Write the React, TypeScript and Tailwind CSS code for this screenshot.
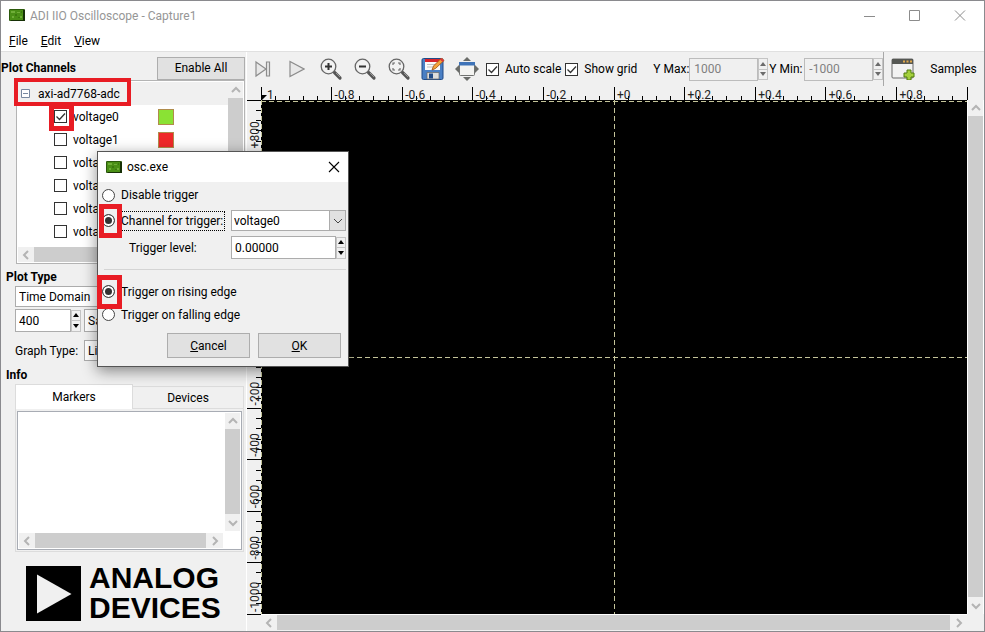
import type { ReactNode } from "react";

function BoardIcon() {
  return (
    <svg width="16" height="13" viewBox="0 0 16 13" aria-hidden="true">
      <rect width="16" height="12" rx="1" fill="#2c5a0c" />
      <rect x="1" y="1" width="13" height="10" fill="#4a8f16" />
      <path d="M2 2h4v2H2zM8 3h3v1H8zM3 7h2v2H3zM11 7h2v2h-2z" fill="#6fae38" />
      <path d="M6 5h2v2H6zM9 8h2v1H9zM12 2h1v2h-1z" fill="#3b780f" />
      <path d="M14 1h2v11H2v-1h12z" fill="#163006" />
    </svg>
  );
}

type Dir = "up" | "down" | "left" | "right";
const chevrons: Record<Dir, string> = {
  up: "M1 7l4-4 4 4",
  down: "M1 3l4 4 4-4",
  left: "M7 1L3 5l4 4",
  right: "M3 1l4 4-4 4",
};

function Chevron({ dir, color = "#b4b4b4", width = 2 }: { dir: Dir; color?: string; width?: number }) {
  return (
    <svg width="10" height="10" viewBox="0 0 10 10" fill="none" stroke={color} strokeWidth={width} aria-hidden="true">
      <path d={chevrons[dir]} />
    </svg>
  );
}

function ScrollV() {
  return (
    <div className="flex h-full w-[15px] shrink-0 flex-col bg-[#f0f0f0]">
      <button aria-label="Scroll up" className="flex h-4 shrink-0 items-center justify-center"><Chevron dir="up" /></button>
      <div className="flex-1 bg-[#cdcdcd]" />
      <button aria-label="Scroll down" className="flex h-[17px] shrink-0 items-center justify-center"><Chevron dir="down" /></button>
    </div>
  );
}

function ScrollH() {
  return (
    <div className="flex h-[15px] min-w-0 flex-1 bg-[#f0f0f0]">
      <button aria-label="Scroll left" className="flex w-4 shrink-0 items-center justify-center"><Chevron dir="left" /></button>
      <div className="flex-1 bg-[#cdcdcd]" />
      <button aria-label="Scroll right" className="flex w-[17px] shrink-0 items-center justify-center"><Chevron dir="right" /></button>
    </div>
  );
}

function Check({ id, label, checked }: { id: string; label: string; checked?: boolean }) {
  return (
    <div className="flex items-center gap-1.5">
      <span className="relative h-[13px] w-[13px] shrink-0">
        <input id={id} type="checkbox" defaultChecked={checked} className="peer block h-[13px] w-[13px] appearance-none border border-[#333] bg-white" />
        <svg className="pointer-events-none absolute inset-0 hidden peer-checked:block" width="13" height="13" viewBox="0 0 13 13" fill="none" stroke="#333" strokeWidth="1.3" aria-hidden="true">
          <path d="M2.5 6.5l3 3 5.5-6" />
        </svg>
      </span>
      <label htmlFor={id} className="whitespace-nowrap">{label}</label>
    </div>
  );
}

function Steps({ disabled }: { disabled?: boolean }) {
  const fill = disabled ? "#6b6b6b" : "#000";
  return (
    <div className="flex h-[22px] w-[10px] shrink-0 flex-col">
      <button aria-label="Increase" className="flex flex-1 items-center justify-center border border-[#c4c4c4] bg-[#f0f0f0]">
        <svg width="6" height="4" viewBox="0 0 6 4" className="shrink-0"><path d="M0 4l3-4 3 4z" fill={fill} /></svg>
      </button>
      <button aria-label="Decrease" className="flex flex-1 items-center justify-center border border-t-0 border-[#c4c4c4] bg-[#f0f0f0]">
        <svg width="6" height="4" viewBox="0 0 6 4" className="shrink-0"><path d="M0 0l3 4 3-4z" fill={fill} /></svg>
      </button>
    </div>
  );
}

function Tool({ label, className, children }: { label: string; className: string; children: ReactNode }) {
  return <button aria-label={label} className={`flex h-6 shrink-0 items-center justify-center ${className}`}>{children}</button>;
}

function Magnifier({ kind }: { kind: "in" | "out" | "fit" }) {
  return (
    <svg width="24" height="24" viewBox="0 0 24 24" fill="none" aria-hidden="true">
      <path d="M15.500 15.500l5.500 5.500" stroke="#555" strokeWidth="3.200" strokeLinecap="round" />
      <path d="M17 16l4 4" stroke="#999" strokeWidth="1" />
      <circle cx="9.500" cy="9.500" r="7.300" fill="#f2f2f2" stroke="#666" strokeWidth="1.300" />
      {kind === "in" && <path d="M9.500 6v7M6 9.500h7" stroke="#333" strokeWidth="2" />}
      {kind === "out" && <path d="M6 9.500h7" stroke="#333" strokeWidth="2" />}
      {kind === "fit" && <path d="M6 8V6h2M11 6h2v2M13 11v2h-2M8 13H6v-2" stroke="#666" strokeWidth="1.100" />}
    </svg>
  );
}

function Toolbar() {
  return (
    <div className="flex h-[34px] shrink-0 items-center overflow-hidden pl-1">
      <Tool label="Single capture" className="mr-[14px] w-6">
        <svg width="20" height="18" viewBox="0 0 20 18" fill="#e8e8e8" stroke="#8c8c8c" strokeWidth="1.200"><path d="M3 2l10 7-10 7zM13.500 2h3v14h-3z" /></svg>
      </Tool>
      <Tool label="Play" className="mr-[14px] w-4">
        <svg width="16" height="18" viewBox="0 0 16 18" fill="#e8e8e8" stroke="#8c8c8c" strokeWidth="1.200"><path d="M1 1.500l14 7.500-14 7.500z" /></svg>
      </Tool>
      <Tool label="Zoom in" className="mr-2.5 w-6"><Magnifier kind="in" /></Tool>
      <Tool label="Zoom out" className="mr-2.5 w-6"><Magnifier kind="out" /></Tool>
      <Tool label="Zoom to fit" className="mr-2.5 w-6"><Magnifier kind="fit" /></Tool>
      <Tool label="Save as" className="mr-2.5 w-6">
        <svg width="24" height="24" viewBox="0 0 24 24" fill="none">
          <rect x="1" y="1.500" width="21" height="21" rx="1.500" fill="#4a7fc4" stroke="#204a87" />
          <rect x="4" y="2" width="15" height="11" fill="#fafafa" />
          <rect x="4" y="2" width="15" height="3" fill="#d8242c" />
          <path d="M6 7.500h9M6 10h7" stroke="#c0c0c0" />
          <path d="M6 15.500h12v6.500H6z" fill="#dcdcdc" stroke="#666" strokeWidth=".7" />
          <rect x="8" y="16.500" width="4" height="5" fill="#204a87" />
          <path d="M20.500 1l2.500 2.500-8.500 8-3.500 1.500 1.500-4z" fill="#f5a33a" stroke="#9b4d0c" strokeWidth=".8" />
          <path d="M20.500 1l2.500 2.500-1.500 1.500-2.700-2.500z" fill="#dc3838" />
        </svg>
      </Tool>
      <Tool label="Full screen" className="mr-[7px] w-6">
        <svg width="24" height="24" viewBox="0 0 24 24">
          <path d="M12 0l4 4H8zM12 24l4-4H8zM0 12l4-4v8zM24 12l-4-4v8z" fill="#6a6c69" />
          <rect x="4.500" y="5.500" width="15" height="13" rx="1" fill="#f3f3f1" stroke="#707270" />
          <path d="M4 5h16v3.500H4z" fill="#3f74b8" />
        </svg>
      </Tool>
      <div className="mr-1 shrink-0"><Check id="autoscale" label="Auto scale" checked /></div>
      <div className="mr-4 shrink-0"><Check id="showgrid" label="Show grid" checked /></div>
      <label htmlFor="ymax" className="w-9 shrink-0 whitespace-nowrap">Y Max:</label>
      <input id="ymax" disabled defaultValue="1000" className="h-[23px] w-[69px] shrink-0 border border-[#bcbcbc] bg-[#f0f0f0] px-1 text-[#808080]" />
      <Steps disabled />
      <label htmlFor="ymin" className="ml-px w-[35px] shrink-0 whitespace-nowrap">Y Min:</label>
      <input id="ymin" disabled defaultValue="-1000" className="h-[23px] w-[69px] shrink-0 border border-[#bcbcbc] bg-[#f0f0f0] px-1 text-[#808080]" />
      <Steps disabled />
      <div className="h-full w-px shrink-0 bg-[#a8a8a8]" />
      <Tool label="New plot" className="mx-[7px] w-6">
        <svg width="24" height="22" viewBox="0 0 24 22">
          <rect x="1" y="1" width="21" height="19" rx="1" fill="#f2f2f2" stroke="#6a6a6a" />
          <path d="M1 1h21v5H1z" fill="#555753" />
          <path d="M12 2.500h2v2h-2zM15.500 2.500h2v2h-2zM19 2.500h2v2h-2z" fill="#e0a84a" />
          <path d="M16 12h4v3h3v4h-3v3h-4v-3h-3v-4h3z" fill="#a4d03c" stroke="#4e7a0c" />
        </svg>
      </Tool>
      <span className="ml-2 whitespace-nowrap">Samples</span>
    </div>
  );
}

const xLabels = ["1", "-0.8", "-0.6", "-0.4", "-0.2", "+0", "+0.2", "+0.4", "+0.6", "+0.8"];
const yLabels = ["", "+800", "+600", "+400", "+200", "+0", "-200", "-400", "-600", "-800", "-1000"];
const ticks = Array.from({ length: 51 }, (_, i) => i);

function Plot() {
  return (
    <div className="grid min-h-0 flex-1 grid-cols-[14px_1fr_17px] grid-rows-[14px_1fr_17px]">
      <div />
      <svg className="h-full w-full overflow-visible" aria-hidden="true">
        {ticks.map((i) => (
          <line key={i} x1={`${i * 2}%`} x2={`${i * 2}%`} y1={i % 5 ? 10 : 1} y2="14" stroke="#000" shapeRendering="crispEdges" />
        ))}
        {xLabels.map((t, i) => (
          <text key={t} x={`${i * 10}%`} dx={i ? 3 : 6} y="13" fontSize="12" fill="#222">{t}</text>
        ))}
        <path d="M1 9h5l-5 5z" fill="#000" />
      </svg>
      <div />
      <svg className="h-full w-full overflow-visible" aria-hidden="true">
        {ticks.map((i) => (
          <line key={i} x1={i % 5 ? 9 : 0} x2="14" y1={`${i * 2}%`} y2={`${i * 2}%`} stroke="#000" shapeRendering="crispEdges" />
        ))}
        {yLabels.map((t, i) => (
          <svg key={i} y={`${i * 10}%`} className="overflow-visible">
            <text transform="rotate(-90)" x={i === 10 ? 2 : 3} y="12" fontSize="12" fill="#222">{t}</text>
          </svg>
        ))}
      </svg>
      <svg className="h-full w-full bg-black" role="img" aria-label="Time domain plot">
        <g stroke="#c4c49a" strokeDasharray="5 3" shapeRendering="crispEdges">
          <line x1="0" x2="100%" y1="1.500" y2="1.500" />
          <line x1=".5" x2=".5" y1="0" y2="100%" />
          <line x1="50%" x2="50%" y1="0" y2="100%" />
          <line x1="0" x2="100%" y1="50%" y2="50%" />
        </g>
      </svg>
      <div className="border-x border-white"><ScrollV /></div>
      <div />
      <div className="flex border-t border-white"><ScrollH /></div>
      <div />
    </div>
  );
}

const channels = [
  ["voltage0", "#8ae234"],
  ["voltage1", "#ef2929"],
  ["voltage2", "#729fcf"],
  ["voltage3", "#fcaf3e"],
  ["voltage4", "#ad7fa8"],
  ["voltage5", "#c17d11"],
];

function Sidebar() {
  return (
    <aside className="flex w-[244px] shrink-0 flex-col">
      <div className="flex h-7 items-center justify-between">
        <h2 className="pt-1 font-bold">Plot Channels</h2>
        <button className="mt-1 h-[23px] w-[88px] border border-[#adadad] bg-[#e1e1e1]">Enable All</button>
      </div>
      <div className="ml-[15px] flex h-[184px] flex-col border border-[#b4b4b4] bg-white p-px">
        <div className="flex min-h-0 flex-1">
          <div className="flex-1 overflow-hidden">
            <div className="flex h-[23px] items-center gap-2 bg-[#f0f0f0] pl-[3px]">
              <svg width="9" height="9" viewBox="0 0 9 9" fill="#fff" stroke="#7888a0" aria-hidden="true"><path d="M.5.5h8v8h-8zM2 4.500h5" /></svg>
              <span>axi-ad7768-adc</span>
            </div>
            {channels.map(([name, color], i) => (
              <div key={name} className="flex h-[23px] items-center pl-9">
                <div className="w-[104px]"><Check id={name} label={name} checked={i === 0} /></div>
                <div className="h-4 w-4 border border-[#b08c4c]" style={{ backgroundColor: color }} />
              </div>
            ))}
          </div>
          <ScrollV />
        </div>
        <div className="mt-[2px] flex pr-[15px]"><ScrollH /></div>
      </div>
      <h2 className="mt-1 ml-[5px] h-[18px] leading-[18px] font-bold">Plot Type</h2>
      <div className="ml-[14px] flex flex-col">
        <select aria-label="Plot type" className="h-[21px] appearance-none border border-[#acacac] bg-white px-[3px]"><option>Time Domain</option></select>
        <div className="mt-[2px] flex items-center">
          <input aria-label="Sample count" defaultValue="400" className="h-[23px] w-[56px] border border-[#acacac] bg-white px-[3px]" />
          <Steps />
          <select aria-label="Units" className="ml-[3px] h-[23px] flex-1 appearance-none border border-[#acacac] bg-white px-[3px]"><option>Samples</option></select>
        </div>
        <div className="mt-2 flex items-center">
          <label htmlFor="graph" className="w-[69px]">Graph Type:</label>
          <select id="graph" className="h-[21px] flex-1 appearance-none border border-[#acacac] bg-white px-[3px]"><option>Lines</option></select>
        </div>
      </div>
      <h2 className="mt-1.5 ml-[5px] h-[17px] leading-[17px] font-bold">Info</h2>
      <div className="mr-px ml-[14px] flex min-h-0 flex-1 flex-col">
        <div className="flex items-end" role="tablist">
          <button role="tab" aria-selected="true" className="h-[25px] w-[118px] border border-b-0 border-[#dcdcdc] bg-white">Markers</button>
          <button role="tab" aria-selected="false" className="h-[23px] flex-1 border border-l-0 border-[#dcdcdc]">Devices</button>
        </div>
        <div className="flex min-h-0 flex-1 border border-t-0 border-[#dcdcdc] p-px pt-[2px]">
          <div className="flex flex-1 flex-col border border-[#a8acb4] bg-white p-px">
            <div className="flex min-h-0 flex-1 justify-end"><ScrollV /></div>
            <div className="mt-[2px] flex pr-[17px]"><ScrollH /></div>
          </div>
        </div>
      </div>
      <div className="mt-[13px] mb-[10px] ml-[25px] flex h-[56px] items-center gap-2">
        <svg width="55" height="55" viewBox="0 0 55 55" className="shrink-0" aria-hidden="true">
          <path d="M0 0h55v55H0z" />
          <path d="M11 8.500v39L45.500 28z" fill="#f0f0f0" />
        </svg>
        <div className="flex flex-col font-['Liberation_Sans',Arial,sans-serif] text-[30px] leading-[30px] font-bold">
          <span>ANALOG</span>
          <span>DEVICES</span>
        </div>
      </div>
    </aside>
  );
}

function Radio({ id, name, label, checked, focused }: { id: string; name: string; label: string; checked?: boolean; focused?: boolean }) {
  return (
    <div className="flex items-center gap-[5px]">
      <input id={id} name={name} type="radio" defaultChecked={checked} className="h-[13px] w-[13px] shrink-0 appearance-none rounded-full border border-[#444] bg-white checked:bg-[#333] checked:shadow-[inset_0_0_0_2px_#fff]" />
      <label htmlFor={id} className={`whitespace-nowrap ${focused ? "border border-dotted border-black py-px pr-px" : "pl-px"}`}>{label}</label>
    </div>
  );
}

function TriggerDialog() {
  return (
    <div role="dialog" aria-label="osc.exe" className="absolute top-[150px] left-[96px] flex w-[252px] flex-col border border-[#555] bg-[#f0f0f0] shadow-[0_4px_14px_rgba(0,0,0,0.45)]">
      <div className="flex h-[30px] items-center gap-[5px] bg-white pr-2 pl-2">
        <BoardIcon />
        <span className="flex-1">osc.exe</span>
        <button aria-label="Close">
          <svg width="12" height="12" viewBox="0 0 12 12" stroke="#000" strokeWidth="1.100"><path d="M1 1l10 10M11 1L1 11" /></svg>
        </button>
      </div>
      <div className="flex flex-col pr-[2px] pl-1">
        <div className="flex h-[26px] items-center"><Radio id="disable" name="mode" label="Disable trigger" /></div>
        <div className="flex h-[25px] items-center justify-between">
          <Radio id="channel" name="mode" label="Channel for trigger:" checked focused />
          <div className="relative w-[115px]">
            <select aria-label="Trigger channel" className="block h-[21px] w-full appearance-none border border-[#acacac] bg-white px-[2px]"><option>voltage0</option></select>
            <span className="pointer-events-none absolute top-0 right-0 flex h-[21px] w-[17px] items-center justify-center border border-[#acacac] bg-[#e1e1e1]"><Chevron dir="down" color="#444" width={1} /></span>
          </div>
        </div>
        <div className="flex h-[29px] items-center">
          <label htmlFor="level" className="w-[129px] pl-[27px]">Trigger level:</label>
          <input id="level" defaultValue="0.00000" className="h-[23px] min-w-0 flex-1 border border-[#acacac] bg-white px-[3px]" />
          <Steps />
        </div>
        <hr className="mt-[7px] mb-[10px] ml-0.5 border-[#d4d4d4]" />
        <div className="flex h-[23px] items-center"><Radio id="rising" name="edge" label="Trigger on rising edge" checked /></div>
        <div className="flex h-[23px] items-center"><Radio id="falling" name="edge" label="Trigger on falling edge" /></div>
        <div className="mt-[7px] mr-[5px] mb-2 flex justify-end gap-2">
          <button className="h-[25px] w-[83px] border border-[#adadad] bg-[#e1e1e1]"><u>C</u>ancel</button>
          <button className="h-[25px] w-[83px] border border-[#adadad] bg-[#e1e1e1]"><u>O</u>K</button>
        </div>
      </div>
    </div>
  );
}

export default function App() {
  return (
    <div className="relative flex h-screen min-h-[600px] flex-col overflow-hidden border border-[#8a8a8e] bg-[#f0f0f0] font-['Roboto','Open_Sans',sans-serif] text-[12px] leading-4 text-black">
      <header className="flex h-[29px] shrink-0 items-center bg-white pr-[18px] pl-2 text-[#969696]">
        <BoardIcon />
        <h1 className="ml-[5px] flex-1">ADI IIO Oscilloscope - Capture1</h1>
        <div className="flex items-center gap-[34px]">
          <button aria-label="Minimize"><svg width="11" height="11" viewBox="0 0 11 11" stroke="#8c8c8c"><path d="M0 6.500h11" /></svg></button>
          <button aria-label="Maximize"><svg width="11" height="11" viewBox="0 0 11 11" fill="none" stroke="#8c8c8c"><path d="M.5.5h10v10H.5z" /></svg></button>
          <button aria-label="Close window"><svg width="12" height="11" viewBox="0 0 12 11" stroke="#8c8c8c"><path d="M1 .5l10 10M11 .5L1 10.500" /></svg></button>
        </div>
      </header>
      <nav className="flex h-[22px] shrink-0 items-center gap-[13px] border-b border-[#e0e0e0] bg-white pt-px pl-2">
        <button><u>F</u>ile</button>
        <button><u>E</u>dit</button>
        <button><u>V</u>iew</button>
      </nav>
      <div className="flex min-h-0 flex-1">
        <Sidebar />
        <main className="ml-px flex min-w-0 flex-1 flex-col border-l border-white">
          <Toolbar />
          <Plot />
        </main>
      </div>
      <TriggerDialog />
      <div className="pointer-events-none absolute top-[77px] left-[13px] h-[28px] w-[117px] border-4 border-[#e81c24]" />
      <div className="pointer-events-none absolute top-[103px] left-[48px] h-[27px] w-[25px] border-[5px] border-[#e81c24]" />
      <div className="pointer-events-none absolute top-[203px] left-[98px] h-[34px] w-[23px] border-[5px] border-[#e81c24]" />
      <div className="pointer-events-none absolute top-[274px] left-[96px] h-[34px] w-[25px] border-[5px] border-[#e81c24]" />
    </div>
  );
}
